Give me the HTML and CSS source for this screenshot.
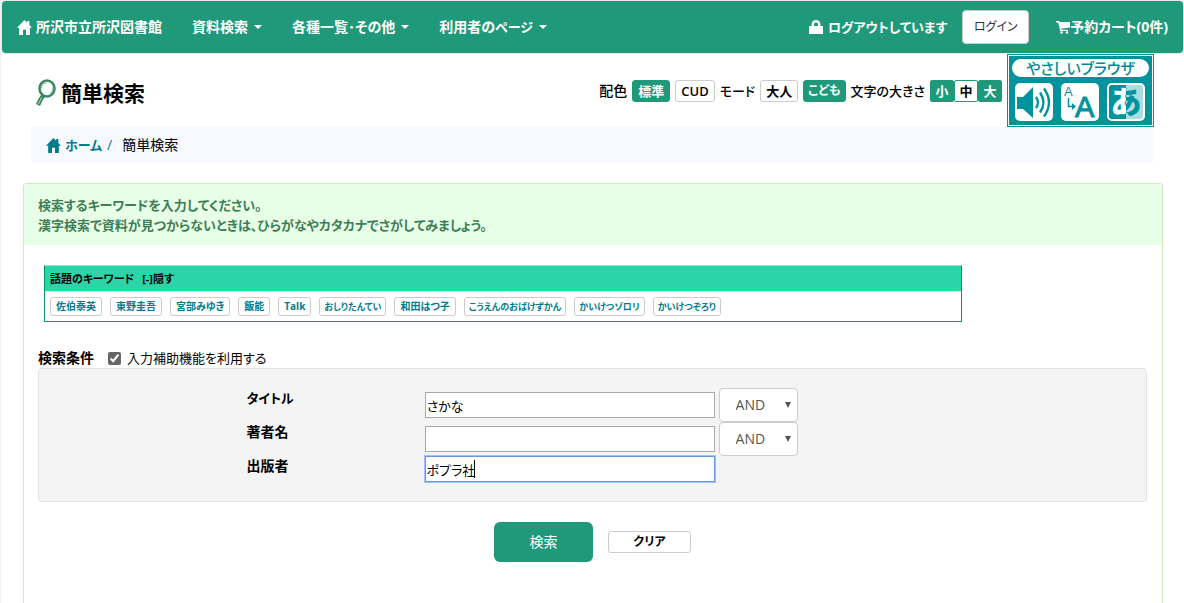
FILE: index.html
```html
<!DOCTYPE html>
<html lang="ja">
<head>
<meta charset="utf-8">
<title>簡単検索 - 所沢市立所沢図書館</title>
<link rel="stylesheet" href="styles.css">
</head>
<body>
<nav class="navbar">
  <a class="nav-link" href="#"><svg class="icon-home" viewBox="0 0 14 14"><path d="M7 0L0 7.200h2V14h3.600V9h2.800v5H12V7.200h2L11.500 4.600V1H9.500v1.600z"/></svg>所沢市立所沢図書館</a>
  <a class="nav-link" href="#">資料検索<span class="caret"></span></a>
  <a class="nav-link" href="#">各種一覧･その他<span class="caret"></span></a>
  <a class="nav-link" href="#"><span>利用者の<span class="kana">ページ</span></span><span class="caret"></span></a>
  <div class="nav-right">
    <span class="nav-status"><svg class="icon-lock" viewBox="0 0 14 14"><path fill-rule="evenodd" d="M0 6h2.500V4.500a4.500 4.500 0 0 1 9 0V6H14v8H0zM5 6h4V4.500a2 2 0 0 0-4 0z"/></svg>ログアウトしています</span>
    <button class="login" type="button">ログイン</button>
    <a class="nav-link cart" href="#"><svg class="icon-cart" viewBox="0 0 14 14"><path d="M0 1h3.200l.5 1H14v5.500L5 8.800l.3.900H12v1.400H4.200L2.200 2.600H0z"/><circle cx="5.500" cy="12.500" r="1.300"/><circle cx="11" cy="12.500" r="1.300"/></svg>予約カート(0件)</a>
  </div>
</nav>

<header class="page-head">
  <h1 class="title"><svg class="icon-search" viewBox="0 0 20 27"><ellipse cx="11" cy="9.500" rx="7.500" ry="8" fill="#fff" stroke="#3f8862" stroke-width="2.600"/><path d="M5.500 9.500c0-3 2-5.500 5-5.700M14 14.500c2-1.500 2.800-3.600 2.600-6" fill="none" stroke="#9cc9b0" stroke-width="1.200"/><path d="M7 17L4.500 20.500 2 26" fill="none" stroke="#3f8862" stroke-width="4.400"/><path d="M5.500 18.500L2.500 25" fill="none" stroke="#b4d6c3" stroke-width="1"/></svg>簡単検索</h1>
  <div class="tools">
    <span>配色</span>
    <button class="chip on" type="button">標準</button>
    <button class="chip" type="button">CUD</button>
    <span class="kana">モード</span>
    <button class="chip" type="button">大人</button>
    <button class="chip on small" type="button">こども</button>
    <span class="kana">文字の大きさ</span>
    <div class="sizes"><button class="size on" type="button">小</button><button class="size" type="button">中</button><button class="size on" type="button">大</button></div>
    <a class="easy" href="#">
      <span class="easy-title">やさしいブラウザ</span>
      <span class="easy-icons">
        <svg class="easy-icon" viewBox="0 0 38 38"><rect width="38" height="38" rx="5" fill="#fff"/><path d="M2 14h6L18 4v31L8 26H2z" fill="#00939c"/><g fill="none" stroke="#00939c" stroke-width="2.400"><path d="M21 14q4 5.500 0 11M25 9.500q7 10 0 20M29 5.500q10 14 0 28"/></g></svg>
        <svg class="easy-icon" viewBox="0 0 38 38"><rect width="38" height="38" rx="5" fill="#fff"/><text x="3" y="13" class="glyph-small">A</text><text x="14" y="34" class="glyph-large">A</text><path d="M7.500 15v8.500H12" fill="none" stroke="#00939c" stroke-width="1.500"/><path d="M11 20l4 3.500-4 3.500z" fill="#00939c"/></svg>
        <svg class="easy-icon" viewBox="0 0 38 38"><defs><linearGradient id="two-tone" gradientUnits="userSpaceOnUse" x1="0" y1="0" x2="38" y2="0"><stop offset=".5" stop-color="#fff"/><stop offset=".5" stop-color="#00939c"/></linearGradient></defs><rect width="38" height="38" rx="5" fill="#fff"/><path d="M19 2H5a3 3 0 0 0-3 3v28a3 3 0 0 0 3 3h14z" fill="#00939c"/><path d="M19 2h14a3 3 0 0 1 3 3v28a3 3 0 0 1-3 3H19z" fill="#abdce0"/><text x="19" y="30" class="glyph-kana">あ</text></svg>
      </span>
    </a>
  </div>
</header>

<nav class="breadcrumb"><a class="crumb" href="#"><svg class="icon-home" viewBox="0 0 14 14"><path d="M7 0L0 7.200h2V14h3.600V9h2.800v5H12V7.200h2L11.500 4.600V1H9.500v1.600z"/></svg><span class="kana">ホーム</span></a><span class="slash">/</span><span>簡単検索</span></nav>

<main class="panel">
  <div class="notice">検索するキーワードを入力してください。<br>漢字検索で資料が見つからないときは、ひらがなやカタカナでさがしてみましょう。</div>
  <div class="panel-body">
    <section class="keywords">
      <h2 class="keywords-head">話題のキーワード<a class="toggle" href="#">[-]隠す</a></h2>
      <div class="keywords-list">
        <a class="tag" href="#">佐伯泰英</a>
        <a class="tag" href="#">東野圭吾</a>
        <a class="tag" href="#">宮部みゆき</a>
        <a class="tag" href="#">飯能</a>
        <a class="tag" href="#">Talk</a>
        <a class="tag tag-kana" href="#">おしりたんてい</a>
        <a class="tag" href="#">和田はつ子</a>
        <a class="tag tag-kana" href="#">こうえんのおばけずかん</a>
        <a class="tag tag-kana" href="#">かいけつゾロリ</a>
        <a class="tag tag-kana" href="#">かいけつぞろり</a>
      </div>
    </section>
    <form>
      <div class="cond-head"><strong>検索条件</strong><input class="check" type="checkbox" id="assist" checked><label class="kana" for="assist">入力補助機能を利用する</label></div>
      <div class="well">
        <div class="row"><label class="name kana" for="t">タイトル</label><input class="text" id="t" type="text" value="さかな"><span class="op-box"><select class="op" aria-label="タイトルの条件"><option>AND</option><option>OR</option></select></span></div>
        <div class="row"><label class="name" for="a">著者名</label><input class="text" id="a" type="text"><span class="op-box"><select class="op" aria-label="著者名の条件"><option>AND</option><option>OR</option></select></span></div>
        <div class="row last"><label class="name" for="p">出版者</label><span class="editing"><input class="text" id="p" type="text" value="ポプラ社" autofocus></span></div>
      </div>
      <div class="actions"><button class="submit" type="submit">検索</button><button class="clear" type="reset">クリア</button></div>
    </form>
  </div>
</main>
</body>
</html>
```
FILE: styles.css
```css
* { box-sizing: border-box; }
html { height: 100%; overflow: hidden; }
body {
  display: flex;
  flex-direction: column;
  height: 100%;
  margin: 0;
  padding: 1px 1px 0;
  border-left: 1px solid #f0f0f0;
  background: #fff;
  color: #000;
  font: 14px/20px "Open Sans", "Noto Sans CJK JP", sans-serif;
  font-feature-settings: "palt";
}
a { color: inherit; text-decoration: none; }
button, input, select { font: inherit; font-feature-settings: inherit; color: inherit; }
.kana { font-size: 13px; }
.navbar {
  display: flex;
  align-items: center;
  flex: none;
  height: 52px;
  border-radius: 4px;
  background: #20997a;
  box-shadow: 0 0 0 1px #e7e7e7;
  color: #fff;
  font-weight: 700;
  white-space: nowrap;
}
.nav-link { display: flex; align-items: center; padding: 0 15px; }
.icon-home { width: 15px; height: 15px; margin-right: 4px; fill: currentColor; }
.icon-lock { width: 14px; height: 14px; margin-right: 5px; fill: currentColor; }
.icon-cart { width: 14px; height: 14px; fill: currentColor; }
.caret { margin-left: 6px; border: 4px solid transparent; border-top-color: currentColor; border-bottom: 0; }
.nav-right { display: flex; align-items: center; margin-left: auto; }
.nav-status { display: flex; align-items: center; margin-right: 15px; font-size: 13px; }
.login {
  width: 67px;
  height: 34px;
  margin-right: 12px;
  padding: 0;
  border: 1px solid #ccc;
  border-radius: 4px;
  background: #fff;
  color: #333;
  font-size: 12px;
  font-weight: 400;
}
.page-head {
  display: flex;
  justify-content: space-between;
  flex: none;
  margin: 1px 29px 0;
  white-space: nowrap;
}
.title { display: flex; align-items: center; gap: 5px; margin: 0 0 0 5px; padding-top: 4px; font-size: 21px; line-height: 28px; }
.icon-search { width: 20px; height: 27px; }
.tools { display: flex; align-items: center; gap: 5px; font-weight: 500; }
.chip { height: 22px; padding: 0 5px; border: 1px solid #ccc; border-radius: 3px; background: #fff; font-size: 13px; font-weight: 600; line-height: 20px; }
.chip.on { border-color: #20997a; background: #20997a; color: #fff; }
.chip.small { padding: 0 4px; font-size: 12px; }
.sizes { display: flex; }
.size { width: 24px; height: 22px; padding: 0; border: 1px solid #20997a; border-radius: 2px; background: #fff; font-size: 13px; font-weight: 600; line-height: 20px; }
.size.on { background: #20997a; color: #fff; }
.easy {
  display: flex;
  flex-direction: column;
  gap: 6px;
  width: 147px;
  height: 73px;
  padding: 4px;
  border: 1px solid #00939c;
  outline: 1px solid #fff;
  outline-offset: -2px;
  background: #00939c;
}
.easy-title { height: 18px; border-radius: 9px; background: #fff; color: #008a93; font-size: 15px; line-height: 18px; text-align: center; }
.easy-icons { display: flex; justify-content: space-between; padding: 0 4px 0 3px; }
.easy-icon { width: 38px; height: 38px; overflow: visible; }
.glyph-small, .glyph-large { fill: #00939c; font-family: "Liberation Sans", sans-serif; }
.glyph-small { font-size: 13px; }
.glyph-large { font-size: 29px; stroke: #00939c; }
.glyph-kana { fill: url(#two-tone); font-size: 31px; font-weight: 900; text-anchor: middle; }
.breadcrumb {
  display: flex;
  align-items: center;
  flex: none;
  height: 36px;
  margin: 0 29px;
  padding: 0 15px;
  border-radius: 0 0 4px 4px;
  background: #f8f9ff;
}
.crumb { display: flex; align-items: center; color: #007c8c; font-weight: 600; }
.slash { margin: 0 10px 0 5px; color: #007c8c; }
.panel {
  flex: 1;
  margin: 20px 20px 0 21px;
  border: 1px solid #d0e9c0;
  border-bottom: 0;
  border-radius: 4px 4px 0 0;
}
.notice { padding: 11px 15px 10px 14px; background: #e6ffe6; color: #3f7d57; font-size: 13px; font-weight: 600; }
.panel-body { padding: 20px 15px 0 14px; }
.keywords { max-width: 918px; margin-left: 6px; border: 1px solid #009865; border-top-color: #ccc; font-weight: 700; }
.keywords-head { margin: 0; padding: 3px 5px 2px; border-bottom: 1px solid #d5e6e0; background: #2cd5a7; font-size: 11px; line-height: 20px; }
.toggle { margin-left: 8px; }
.keywords-list { display: flex; flex-wrap: wrap; gap: 8px; padding: 5px; }
.tag { padding: 0 5px; border: 1px solid #ccc; border-radius: 3px; color: #007c8c; font-size: 10px; line-height: 17px; }
.tag-kana { padding: 0 4px; font-size: 9px; }
.cond-head { display: flex; align-items: center; height: 20px; margin-top: 26px; }
.check { width: 13px; height: 13px; margin: 0 6px 0 14px; accent-color: #666; }
.well { padding: 19px 0 11px 18%; border: 1px solid #e3e3e3; border-radius: 4px; background: #f4f4f4; }
.row { display: grid; grid-template-columns: 178px 290px auto; justify-content: start; align-items: center; height: 34px; padding-left: 8px; }
.row.last { align-items: start; }
.name { align-self: start; font-weight: 700; }
.text { display: block; width: 100%; height: 26px; padding: 0 1px; border: 1px solid #a9a9a9; background: #fff; font-size: 13px; }
.text:focus { outline: 1px solid #a0c4f8; border-color: #6a97dc; caret-color: transparent; }
.editing { position: relative; }
.editing:focus-within::after { content: ""; position: absolute; top: 4px; left: 49px; width: 1px; height: 18px; background: #000; }
.op-box { position: relative; margin-left: 4px; }
.op-box::after {
  content: "";
  position: absolute;
  top: 14px;
  right: 7px;
  border: 3px solid transparent;
  border-top: 6px solid #555;
  border-bottom: 0;
  pointer-events: none;
}
.op {
  display: block;
  width: 79px;
  height: 34px;
  padding: 0 16px;
  appearance: none;
  border: 1px solid #ccc;
  border-radius: 4px;
  background: #fff;
  color: #555;
}
.actions { display: flex; justify-content: center; align-items: center; gap: 15px; margin-top: 20px; }
.submit { width: 99px; height: 40px; border: 0; border-radius: 6px; background: #20997a; color: #fff; }
.clear { width: 83px; height: 22px; padding: 0; border: 1px solid #ccc; border-radius: 3px; background: #fff; font-size: 12px; font-weight: 600; line-height: 20px; }
```
